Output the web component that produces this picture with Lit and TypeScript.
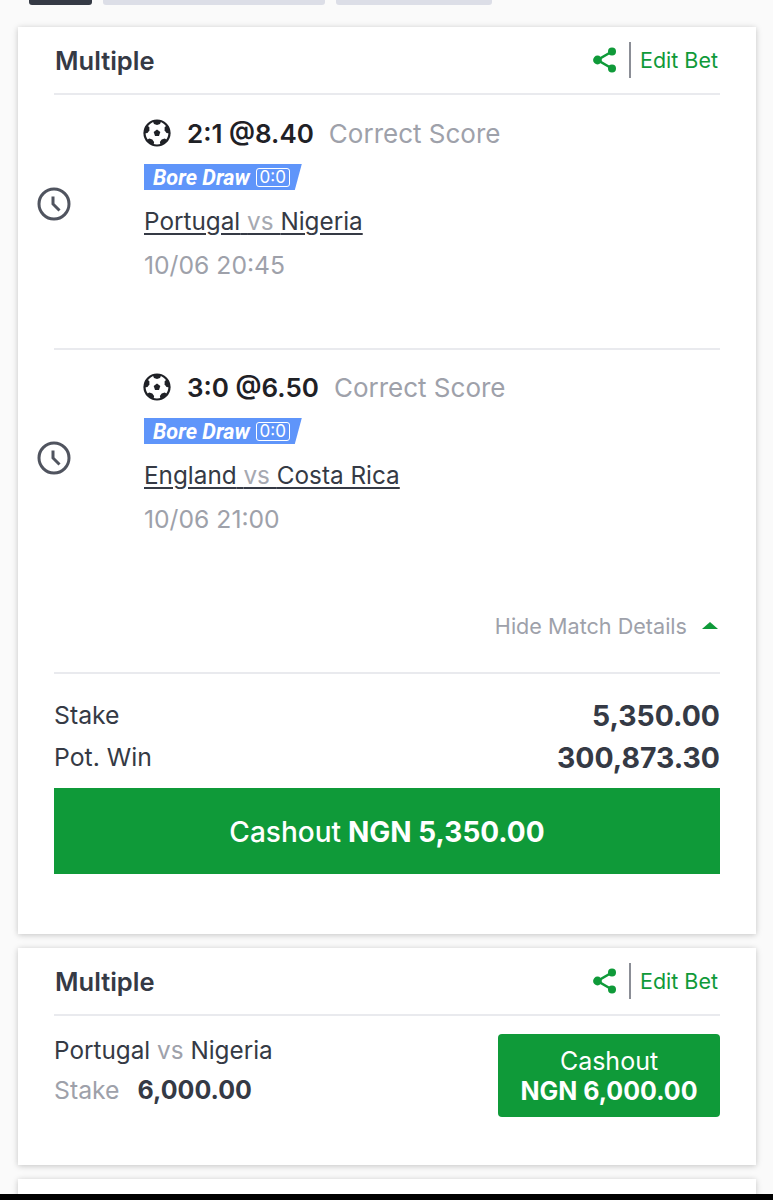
import { LitElement, html, css, svg } from 'lit';
import { customElement } from 'lit/decorators.js';

const shareIcon = html`<svg class="share" viewBox="0 0 28 28" width="28" height="28">
  <path d="M21 5.5 6.5 14 21 22.5" fill="none" stroke="#0f9a39" stroke-width="2.6" />
  <circle cx="21" cy="5.5" r="4" fill="#0f9a39" />
  <circle cx="6.5" cy="14" r="4.4" fill="#0f9a39" />
  <circle cx="21" cy="22.5" r="4" fill="#0f9a39" />
</svg>`;

const clockIcon = html`<svg viewBox="0 0 34 34" width="34" height="34">
  <circle cx="17" cy="17" r="15" fill="none" stroke="#50545f" stroke-width="3" />
  <path d="M16 9.5v7.5l6.5 6.5" fill="none" stroke="#50545f" stroke-width="3" />
</svg>`;

// one edge patch, repeated round the ball
const ballPatches = [0, 72, 144, 216, 288].map(
  (deg) => svg`<path transform="rotate(${deg} 14 14)" d="M9.5 1.5h9L17 5 14 6 11 5z" />`,
);

const ballIcon = html`<svg viewBox="0 0 28 28" width="28" height="28">
  <circle cx="14" cy="14" r="12.5" fill="#fff" stroke="#1f2126" stroke-width="2.2" />
  <g fill="#1f2126">
    ${ballPatches}
    <path d="M14 10.6l3.3 2.4-1.3 3.9h-4l-1.3-3.9z" />
  </g>
</svg>`;

interface Match {
  score: string;
  home: string;
  away: string;
  time: string;
}

const matches: Match[] = [
  { score: '2:1 @8.40', home: 'Portugal', away: 'Nigeria', time: '10/06 20:45' },
  { score: '3:0 @6.50', home: 'England', away: 'Costa Rica', time: '10/06 21:00' },
];

@customElement('app-root')
export class AppRoot extends LitElement {
  static styles = css`
    :host {
      display: block;
      position: relative;
      height: 1200px;
      overflow: hidden;
      background: #fafafa;
      font-family: Inter, 'Liberation Sans', sans-serif;
      color: #353a45;
    }
    .tabs {
      display: flex;
      gap: 11px;
      height: 5px;
      padding-left: 29px;
      margin-bottom: 22px;
    }
    .tabs div {
      border-radius: 0 0 3px 3px;
      background: #dcdee7;
    }
    .tabs .on { width: 63px; background: #353a45; }
    .tabs .t2 { width: 222px; }
    .tabs .t3 { width: 156px; }

    .card {
      margin: 0 17px 14px 18px;
      background: #fff;
      box-shadow: 0 1px 6px rgba(0, 0, 0, 0.22);
      padding: 0 36px;
    }
    .card.first { height: 907px; }
    .card.second { height: 217px; }
    .card.third { height: 60px; }

    .head {
      display: flex;
      align-items: center;
      justify-content: space-between;
      box-sizing: border-box;
      height: 68px;
      border-bottom: 2px solid #e9eaee;
      padding: 0 2px 0 1px;
    }
    .title { font-size: 25.5px; font-weight: 600; }
    .actions {
      display: flex;
      align-items: center;
      color: #0f9a39;
      font-size: 21.5px;
    }
    .share { margin-right: 10px; }
    .sep {
      width: 1.5px;
      height: 36px;
      background: #8b8e96;
      margin-right: 9px;
    }

    .match {
      display: flex;
      align-items: flex-start;
      box-sizing: border-box;
      height: 255px;
      padding-top: 24px;
      border-bottom: 2px solid #e9eaee;
    }
    .match.last { border-bottom: none; height: 244px; padding-top: 23px; }
    .clock { flex: none; width: 107px; margin: 68px 0 0 -17px; }
    .clock svg { display: block; }
    .info {
      display: flex;
      flex-direction: column;
    }
    .pick {
      display: flex;
      align-items: center;
      height: 28px;
    }
    .pick svg { margin-right: 16px; margin-left: -1px; }
    .score { font-size: 26px; font-weight: 600; color: #1f2126; margin-right: 15px; }
    .market { font-size: 26px; color: #9ea1aa; }
    .tag {
      display: flex;
      align-items: center;
      align-self: flex-start;
      gap: 6px;
      height: 26px;
      margin-top: 17px;
      padding: 0 12px 0 9px;
      background: #5f95fa;
      color: #fff;
      clip-path: polygon(0 0, 100% 0, calc(100% - 7px) 100%, 0 100%);
      font-family: Roboto, sans-serif;
      font-size: 21.6px;
      font-weight: 700;
      font-style: italic;
    }
    .tag span {
      display: flex;
      align-items: center;
      justify-content: center;
      box-sizing: border-box;
      width: 34px;
      height: 19px;
      border: 1.5px solid #fff;
      border-radius: 3px;
      font-family: Inter, sans-serif;
      font-size: 17px;
      font-style: normal;
      font-weight: 400;
    }
    .teams {
      margin-top: 17px;
      font-size: 24.3px;
      line-height: 28px;
      color: #353a45;
      text-decoration: underline;
      text-decoration-thickness: 2px;
      text-underline-offset: 3px;
      white-space: pre;
    }
    .vs { color: #a6a9b1; text-decoration-color: #e4e5e8; }
    .time {
      margin-top: 16px;
      font-size: 24.7px;
      line-height: 28px;
      color: #9ea1aa;
    }

    .toggle {
      display: flex;
      align-items: center;
      justify-content: flex-end;
      box-sizing: border-box;
      height: 81px;
      margin-top: -1px;
      padding-bottom: 14px;
      border-bottom: 2px solid #e9eaee;
      color: #9ea1aa;
      font-size: 21.6px;
    }
    .arrow {
      width: 0;
      height: 0;
      margin: 0 2px 0 15px;
      border-left: 8px solid transparent;
      border-right: 8px solid transparent;
      border-bottom: 7px solid #0f9a39;
    }
    .totals { padding-top: 20px; }
    .line {
      display: flex;
      align-items: center;
      justify-content: space-between;
      height: 42px;
      font-size: 24.8px;
    }
    .line b { font-size: 28.4px; font-weight: 700; }
    .cashout {
      display: flex;
      align-items: center;
      justify-content: center;
      gap: 7px;
      height: 86px;
      margin-top: 10px;
      padding-top: 1px;
      box-sizing: border-box;
      background: #0f9a39;
      color: #fff;
      font-size: 28px;
      font-weight: 500;
    }
    .cashout b { font-weight: 700; }

    .brief {
      display: flex;
      justify-content: space-between;
      padding-top: 18px;
    }
    .brief-teams { font-size: 24.3px; margin-top: 1px; line-height: 30px; }
    .brief-teams i { font-style: normal; color: #9ea1aa; }
    .brief-stake {
      display: flex;
      align-items: center;
      gap: 18px;
      margin-top: 10px;
      font-size: 24.8px;
      color: #9ea1aa;
    }
    .brief-stake b { font-size: 25px; font-weight: 700; color: #353a45; }
    .small-cash {
      display: flex;
      flex-direction: column;
      align-items: center;
      justify-content: center;
      width: 222px;
      height: 83px;
      border-radius: 4px;
      background: #0f9a39;
      color: #fff;
      font-size: 25px;
      line-height: 30px;
    }
    .small-cash b { font-weight: 700; }

    .home-bar {
      position: absolute;
      left: 0;
      right: 0;
      bottom: 0;
      height: 6px;
      background: #000;
    }
  `;

  private renderHead() {
    return html`<div class="head">
      <div class="title">Multiple</div>
      <div class="actions">${shareIcon}<div class="sep"></div>Edit Bet</div>
    </div>`;
  }

  private renderMatch(m: Match, last: boolean) {
    return html`<div class="match ${last ? 'last' : ''}">
      <div class="clock">${clockIcon}</div>
      <div class="info">
        <div class="pick">${ballIcon}<span class="score">${m.score}</span><span class="market">Correct Score</span></div>
        <div class="tag">Bore Draw <span>0:0</span></div>
        <div class="teams">${m.home} <span class="vs">vs </span>${m.away}</div>
        <div class="time">${m.time}</div>
      </div>
    </div>`;
  }

  render() {
    return html`
      <div class="tabs">
        <div class="on"></div>
        <div class="t2"></div>
        <div class="t3"></div>
      </div>
      <div class="card first">
        ${this.renderHead()}
        ${matches.map((m, i) => this.renderMatch(m, i === matches.length - 1))}
        <div class="toggle">Hide Match Details<span class="arrow"></span></div>
        <div class="totals">
          <div class="line"><span>Stake</span><b>5,350.00</b></div>
          <div class="line"><span>Pot. Win</span><b>300,873.30</b></div>
        </div>
        <div class="cashout">Cashout <b>NGN 5,350.00</b></div>
      </div>
      <div class="card second">
        ${this.renderHead()}
        <div class="brief">
          <div>
            <div class="brief-teams">Portugal <i>vs</i> Nigeria</div>
            <div class="brief-stake">Stake <b>6,000.00</b></div>
          </div>
          <div class="small-cash"><span>Cashout</span><b>NGN 6,000.00</b></div>
        </div>
      </div>
      <div class="card third"></div>
      <div class="home-bar"></div>
    `;
  }
}
